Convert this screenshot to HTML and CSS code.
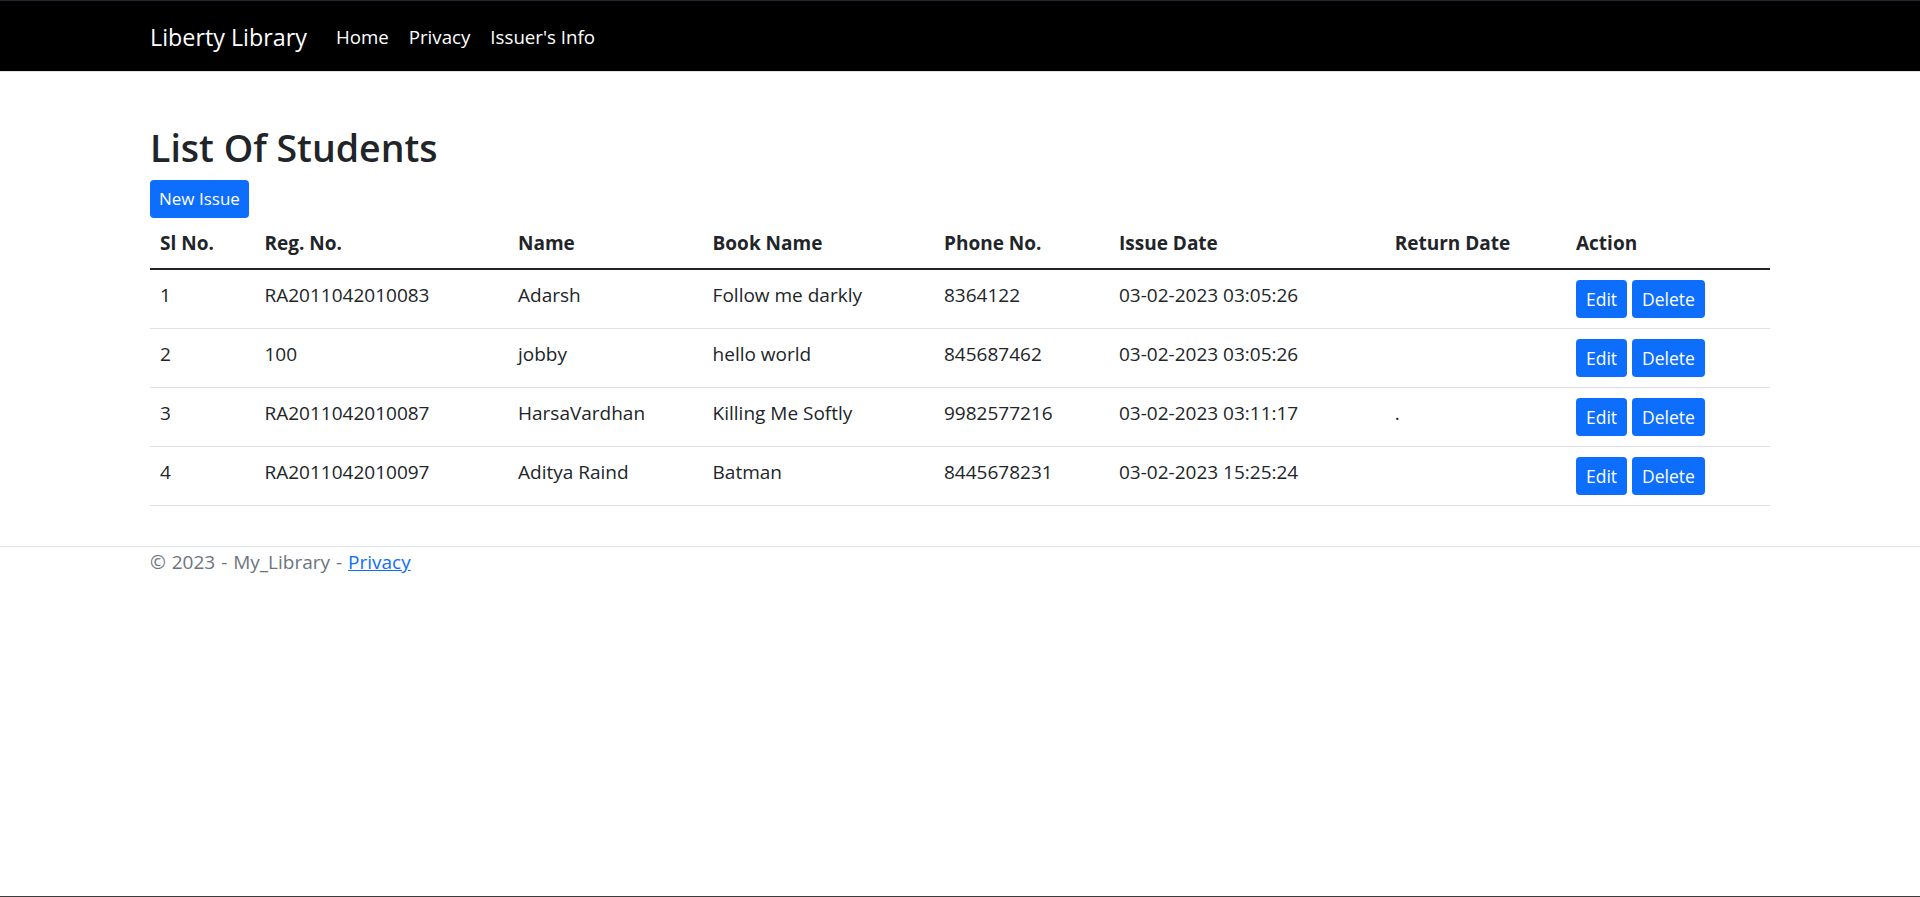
FILE: index.html
```html
<!DOCTYPE html>
<html lang="en">
<head>
<meta charset="utf-8">
<title>List Of Students - My_Library</title>
<link rel="stylesheet" href="styles.css">
</head>
<body>
<header class="navbar">
  <div class="container nav-inner">
    <a class="brand" href="#">Liberty Library</a>
    <nav class="nav-links">
      <a class="nav-link" href="#">Home</a>
      <a class="nav-link" href="#">Privacy</a>
      <a class="nav-link" href="#">Issuer's Info</a>
    </nav>
  </div>
</header>
<main class="container main">
  <h1 class="title">List Of Students</h1>
  <div class="actions"><a class="btn btn-new" href="#">New Issue</a></div>
  <table class="table">
    <colgroup>
      <col class="c1"><col class="c2"><col class="c3"><col class="c4"><col class="c5"><col class="c6"><col class="c7"><col class="c8">
    </colgroup>
    <thead>
      <tr><th>Sl No.</th><th>Reg. No.</th><th>Name</th><th>Book Name</th><th>Phone No.</th><th>Issue Date</th><th>Return Date</th><th>Action</th></tr>
    </thead>
    <tbody>
      <tr><td>1</td><td>RA2011042010083</td><td>Adarsh</td><td>Follow me darkly</td><td>8364122</td><td>03-02-2023 03:05:26</td><td></td><td><a class="btn" href="#">Edit</a> <a class="btn" href="#">Delete</a></td></tr>
      <tr><td>2</td><td>100</td><td>jobby</td><td>hello world</td><td>845687462</td><td>03-02-2023 03:05:26</td><td></td><td><a class="btn" href="#">Edit</a> <a class="btn" href="#">Delete</a></td></tr>
      <tr><td>3</td><td>RA2011042010087</td><td>HarsaVardhan</td><td>Killing Me Softly</td><td>9982577216</td><td>03-02-2023 03:11:17</td><td>.</td><td><a class="btn" href="#">Edit</a> <a class="btn" href="#">Delete</a></td></tr>
      <tr><td>4</td><td>RA2011042010097</td><td>Aditya Raind</td><td>Batman</td><td>8445678231</td><td>03-02-2023 15:25:24</td><td></td><td><a class="btn" href="#">Edit</a> <a class="btn" href="#">Delete</a></td></tr>
    </tbody>
  </table>
</main>
<footer class="footer">
  <div class="container">&copy; 2023 - My_Library - <a class="footer-link" href="#">Privacy</a></div>
</footer>
</body>
</html>
```
FILE: styles.css
```css
html {
  box-sizing: border-box;
  min-height: 100vh;
  border-top: 1px solid #24262f;
  border-bottom: 1px solid #3c3c3c;
}
*, *::before, *::after { box-sizing: inherit; }
body {
  margin: 0;
  font-family: "Open Sans", "Noto Sans", sans-serif;
  font-size: 19px;
  line-height: 30px;
  color: #212529;
  background: #fff;
}
.container {
  max-width: 1650px;
  margin: 0 auto;
  padding: 0 15px;
}
.navbar {
  background: #000;
  border-bottom: 1px solid #dee2e6;
  padding: 10px 0;
}
.nav-inner {
  display: flex;
  align-items: center;
  height: 50px;
  padding-top: 2px;
}
.brand {
  color: #fff;
  text-decoration: none;
  font-size: 23.3px;
  line-height: 37px;
  margin-right: 19px;
}
.nav-links { display: flex; }
.nav-link {
  color: #fff;
  text-decoration: none;
  font-size: 18.7px;
  line-height: 30px;
  padding: 10px;
}
.main { padding-top: 52px; padding-bottom: 20px; }
.title {
  margin: 0 0 8px;
  font-size: 37.5px;
  font-weight: 600;
  line-height: 48px;
}
.actions { line-height: 0; }
.btn {
  display: inline-block;
  height: 38px;
  padding: 0 10px;
  background: #0d6efd;
  color: #fff;
  border-radius: 4px;
  font-size: 17.5px;
  line-height: 38px;
  text-decoration: none;
  vertical-align: top;
}
.btn-new { font-size: 17px; padding: 0 9px; }
.table {
  width: 1620px;
  table-layout: fixed;
  border-collapse: collapse;
  margin-bottom: 20px;
}
.c1 { width: 104.5px; }
.c2 { width: 253.5px; }
.c3 { width: 194.6px; }
.c4 { width: 231.4px; }
.c5 { width: 175px; }
.c6 { width: 275.7px; }
.c7 { width: 181.3px; }
.c8 { width: 204px; }
.table th, .table td {
  padding: 10px;
  text-align: left;
  vertical-align: top;
  white-space: nowrap;
}
.table th {
  font-weight: 700;
  border-bottom: 2px solid #212529;
}
.table td {
  border-bottom: 1px solid #dee2e6;
}
.footer {
  border-top: 1px solid #dee2e6;
  color: #6c757d;
  line-height: 30px;
  word-spacing: 1px;
}
.footer-link { color: #0d6efd; }
```
